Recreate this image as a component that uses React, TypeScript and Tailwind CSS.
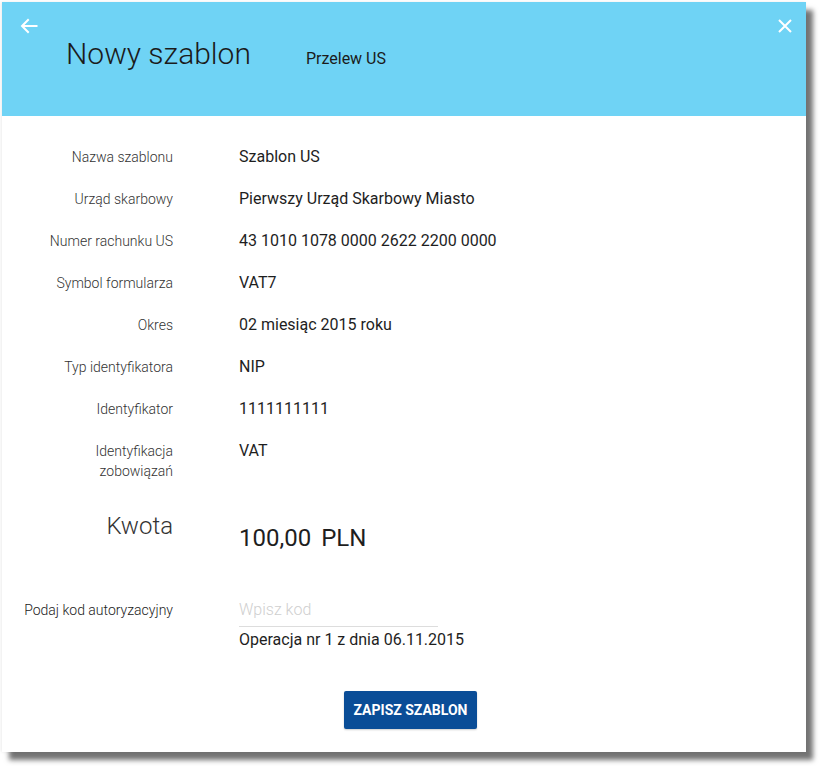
import React from 'react'

type Row = { label: string[]; value: string }

const rows: Row[] = [
  { label: ['Nazwa szablonu'], value: 'Szablon US' },
  { label: ['Urząd skarbowy'], value: 'Pierwszy Urząd Skarbowy Miasto' },
  { label: ['Numer rachunku US'], value: '43 1010 1078 0000 2622 2200 0000' },
  { label: ['Symbol formularza'], value: 'VAT7' },
  { label: ['Okres'], value: '02 miesiąc 2015 roku' },
  { label: ['Typ identyfikatora'], value: 'NIP' },
  { label: ['Identyfikator'], value: '1111111111' },
  { label: ['Identyfikacja', 'zobowiązań'], value: 'VAT' },
]

const BackArrow = () => (
  <svg width="18" height="16" viewBox="0 0 18 16" fill="none" stroke="white" strokeWidth="2" strokeLinecap="square">
    <path d="M8 2 L2 8 L8 14 M2.5 8 H16.5" />
  </svg>
)

const CloseIcon = () => (
  <svg width="16" height="16" viewBox="0 0 16 16" fill="none" stroke="white" strokeWidth="2">
    <path d="M2 2 L14 14 M14 2 L2 14" />
  </svg>
)

const App: React.FC = () => {
  return (
    <div className="min-h-screen bg-white pl-[2px] pt-[2px]" style={{ fontFamily: 'Roboto, "Liberation Sans", sans-serif' }}>
      {/* Panel with the heavy drop shadow */}
      <div className="w-[804px] h-[750px] bg-white flex flex-col shadow-[7px_8px_5px_rgba(0,0,0,0.55),-1px_0_3px_rgba(0,0,0,0.08)]">
        {/* Header */}
        <div className="h-[114px] bg-[#6fd3f5] flex items-start pl-[18px] pr-[13px] pt-[15px]">
          <button className="mt-[1px]">
            <BackArrow />
          </button>
          <div className="flex items-baseline ml-[28px] mt-[19px]">
            <h1 className="text-[30px] leading-[36px] font-light text-[#1b1b1b]">Nowy szablon</h1>
            <span className="ml-[55px] text-[16px] text-[#1b1b1b]">Przelew US</span>
          </div>
          <button className="ml-auto mt-[1px]">
            <CloseIcon />
          </button>
        </div>

        {/* Body */}
        <div className="flex flex-col pt-[31px]">
          <div className="flex flex-col gap-[22px]">
            {rows.map((r) => (
              <div key={r.value} className="flex items-baseline">
                <div className="w-[171px] shrink-0 text-right text-[14px] leading-[20px] font-light text-[#333]">
                  {r.label.map((l) => (
                    <div key={l}>{l}</div>
                  ))}
                </div>
                <div className="ml-[66px] text-[16px] leading-[20px] text-[#1e1e1e]">{r.value}</div>
              </div>
            ))}
          </div>

          {/* Amount */}
          <div className="flex items-start mt-[29px]">
            <div className="w-[171px] shrink-0 text-right text-[24px] leading-[32px] font-light text-[#333]">Kwota</div>
            <div className="ml-[66px] mt-[12px] text-[24px] leading-[32px] text-[#1e1e1e]">
              100,00<span className="ml-[10px]">PLN</span>
            </div>
          </div>

          {/* Authorization code */}
          <div className="flex items-start mt-[46px]">
            <div className="w-[171px] shrink-0 text-right text-[14px] leading-[20px] font-light text-[#222]">Podaj kod autoryzacyjny</div>
            <div className="ml-[66px] flex flex-col">
              <input
                placeholder="Wpisz kod"
                className="w-[199px] text-[16px] leading-[20px] font-light pb-[6px] border-b border-[#dddddd] outline-none placeholder:text-[#cfcfcf]"
              />
              <div className="mt-[3px] text-[16px] leading-[20px] text-[#1e1e1e]">Operacja nr 1 z dnia 06.11.2015</div>
            </div>
          </div>

          <div className="flex justify-center pl-[13px] mt-[41px]">
            <button className="w-[133px] h-[38px] rounded-[2px] bg-[#0a4d97] text-white text-[14px] font-bold shadow-[0_1px_2px_rgba(0,0,0,0.2)]">
              ZAPISZ SZABLON
            </button>
          </div>
        </div>
      </div>
    </div>
  )
}

export default App
